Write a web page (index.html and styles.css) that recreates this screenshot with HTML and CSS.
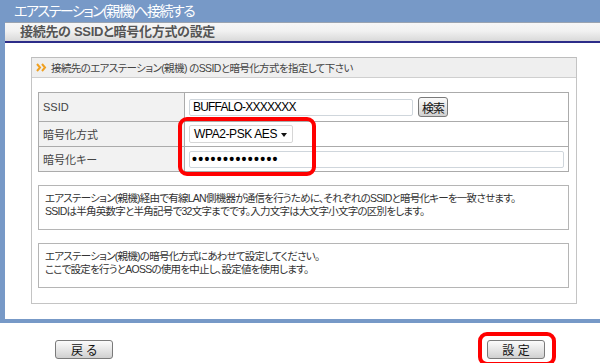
FILE: index.html
```html
<!DOCTYPE html>
<html lang="ja">
<head>
<meta charset="utf-8">
<link rel="stylesheet" href="styles.css">
</head>
<body>
<div class="frame">
  <div class="title">エアステーション(親機)へ接続する</div>
  <div class="main">
    <div class="subbar">接続先の SSIDと暗号化方式の設定</div>
    <div class="content">
      <div class="panel">
        <div class="panel-head">
          <svg class="arrows" width="11" height="9" viewBox="0 0 11 9">
            <path d="M1 1 L4 4.5 L1 8" fill="none" stroke="#f0a020" stroke-width="2"/>
            <path d="M6 1 L9 4.5 L6 8" fill="none" stroke="#f0a020" stroke-width="2"/>
          </svg>
          <span>接続先のエアステーション(親機) のSSIDと暗号化方式を指定して下さい</span>
        </div>
        <div class="panel-body">
          <div class="form">
            <div class="row r1">
              <div class="label">SSID</div>
              <div class="value">
                <div class="input ssid">BUFFALO-XXXXXXX</div>
                <div class="btn small">検索</div>
              </div>
            </div>
            <div class="row r2">
              <div class="label">暗号化方式</div>
              <div class="value">
                <div class="select">WPA2-PSK AES<span class="caret"></span></div>
              </div>
            </div>
            <div class="row r3">
              <div class="label">暗号化キー</div>
              <div class="value">
                <div class="input key">••••••••••••••</div>
              </div>
            </div>
            <div class="mark mark1"></div>
          </div>
          <div class="note">エアステーション(親機)経由で有線LAN側機器が通信を行うために、それぞれのSSIDと暗号化キーを一致させます。<br>SSIDは半角英数字と半角記号で32文字までです。入力文字は大文字小文字の区別をします。</div>
          <div class="note">エアステーション(親機)の暗号化方式にあわせて設定してください。<br>ここで設定を行うとAOSSの使用を中止し、設定値を使用します。</div>
        </div>
      </div>
    </div>
  </div>
</div>
<div class="actions">
  <div class="btn big back">戻 る</div>
  <div class="set-wrap">
    <div class="btn big">設 定</div>
    <div class="mark mark2"></div>
  </div>
</div>
</body>
</html>
```
FILE: styles.css
```css
* { box-sizing: border-box; }
body {
  margin: 0;
  width: 600px;
  height: 363px;
  background: #fff;
  font-family: "Liberation Sans", "Noto Sans CJK JP", sans-serif;
  font-feature-settings: "palt";
  color: #333;
  overflow: hidden;
}
.frame {
  background: #7799c7;
  padding-bottom: 4px;
}
.title {
  height: 22px;
  padding-left: 14px;
  color: #fff;
  font-size: 14px;
  letter-spacing: -1.5px;
  line-height: 22px;
}
.main {
  margin-left: 5px;
  background: #fff;
}
.subbar {
  height: 21px;
  padding-left: 15px;
  border-top: 1px solid #9aa3b0;
  border-bottom: 2px solid #2c2c88;
  background: linear-gradient(#f6f6f6, #f1f1f1 45%, #d9d9d9);
  color: #555;
  font-size: 13px;
  font-weight: bold;
  letter-spacing: -0.3px;
  line-height: 18px;
}
.content {
  padding: 14px 23px 15px 26px;
}
.panel {
  border: 1px solid #c4c4c4;
  border-top-color: #bdbdbd;
}
.panel-head {
  height: 20px;
  background: #efefef;
  border-bottom: 1px solid #cfcfcf;
  display: flex;
  align-items: center;
  gap: 4px;
  padding-left: 4px;
  font-size: 10.5px;
  letter-spacing: -0.6px;
  color: #444;
}
.arrows { flex: none; }
.panel-body {
  padding: 14px 7px 15px 6px;
  display: flex;
  flex-direction: column;
  gap: 13px;
}
.form {
  position: relative;
  border: 1px solid #ababab;
}
.row {
  display: flex;
  border-top: 1px solid #ababab;
}
.row.r1 { border-top: 0; height: 28px; }
.row.r2 { height: 25px; }
.row.r3 { height: 25px; }
.label {
  width: 146px;
  flex: none;
  background: #f2f2f2;
  border-right: 1px solid #ababab;
  display: flex;
  align-items: center;
  padding-left: 4px;
  font-size: 11px;
  color: #444;
}
.value {
  flex: 1;
  display: flex;
  align-items: center;
  gap: 5px;
  padding-left: 4px;
  background: #fff;
}
.input {
  height: 17px;
  border: 1px solid #cfd6dc;
  border-radius: 2px;
  background: #fff;
  font-size: 12px;
  letter-spacing: -0.8px;
  line-height: 15px;
  color: #000;
  padding-left: 3px;
}
.input.ssid { width: 224px; }
.input.key {
  width: 375px;
  font-size: 14px;
  letter-spacing: 1.3px;
  font-weight: bold;
  line-height: 14px;
  padding-left: 2px;
}
.select {
  position: relative;
  width: 104px;
  height: 18px;
  border: 1px solid #d6d6d6;
  border-radius: 2px;
  font-size: 12px;
  letter-spacing: -0.4px;
  line-height: 16px;
  color: #000;
  padding-left: 4px;
}
.caret {
  position: absolute;
  right: 5px;
  top: 7px;
  border-left: 3px solid transparent;
  border-right: 3px solid transparent;
  border-top: 4px solid #111;
}
.btn {
  display: flex;
  align-items: center;
  justify-content: center;
  border: 1px solid #7a7a7a;
  border-radius: 3px;
  background: linear-gradient(#fbfbfb, #e6e6e6 50%, #d0d0d0);
  color: #111;
}
.btn.small {
  width: 30px;
  height: 20px;
  font-size: 12px;
  letter-spacing: -1px;
}
.btn.big {
  width: 58px;
  height: 19px;
  font-size: 12px;
}
.note {
  border: 1px solid #b5b5b5;
  height: 45px;
  padding: 6px 0 0 6px;
  font-size: 10.5px;
  letter-spacing: -0.75px;
  line-height: 13px;
  color: #333;
}
.mark {
  position: absolute;
  border: 4px solid #f00;
  border-radius: 9px;
}
.mark1 {
  left: 139px;
  top: 24px;
  width: 138px;
  height: 59px;
}
.actions {
  display: flex;
  justify-content: space-between;
  padding: 17px 55px 0 55px;
}
.set-wrap {
  position: relative;
}
.mark2 {
  left: -9px;
  top: -8px;
  width: 78px;
  height: 34px;
}
```
